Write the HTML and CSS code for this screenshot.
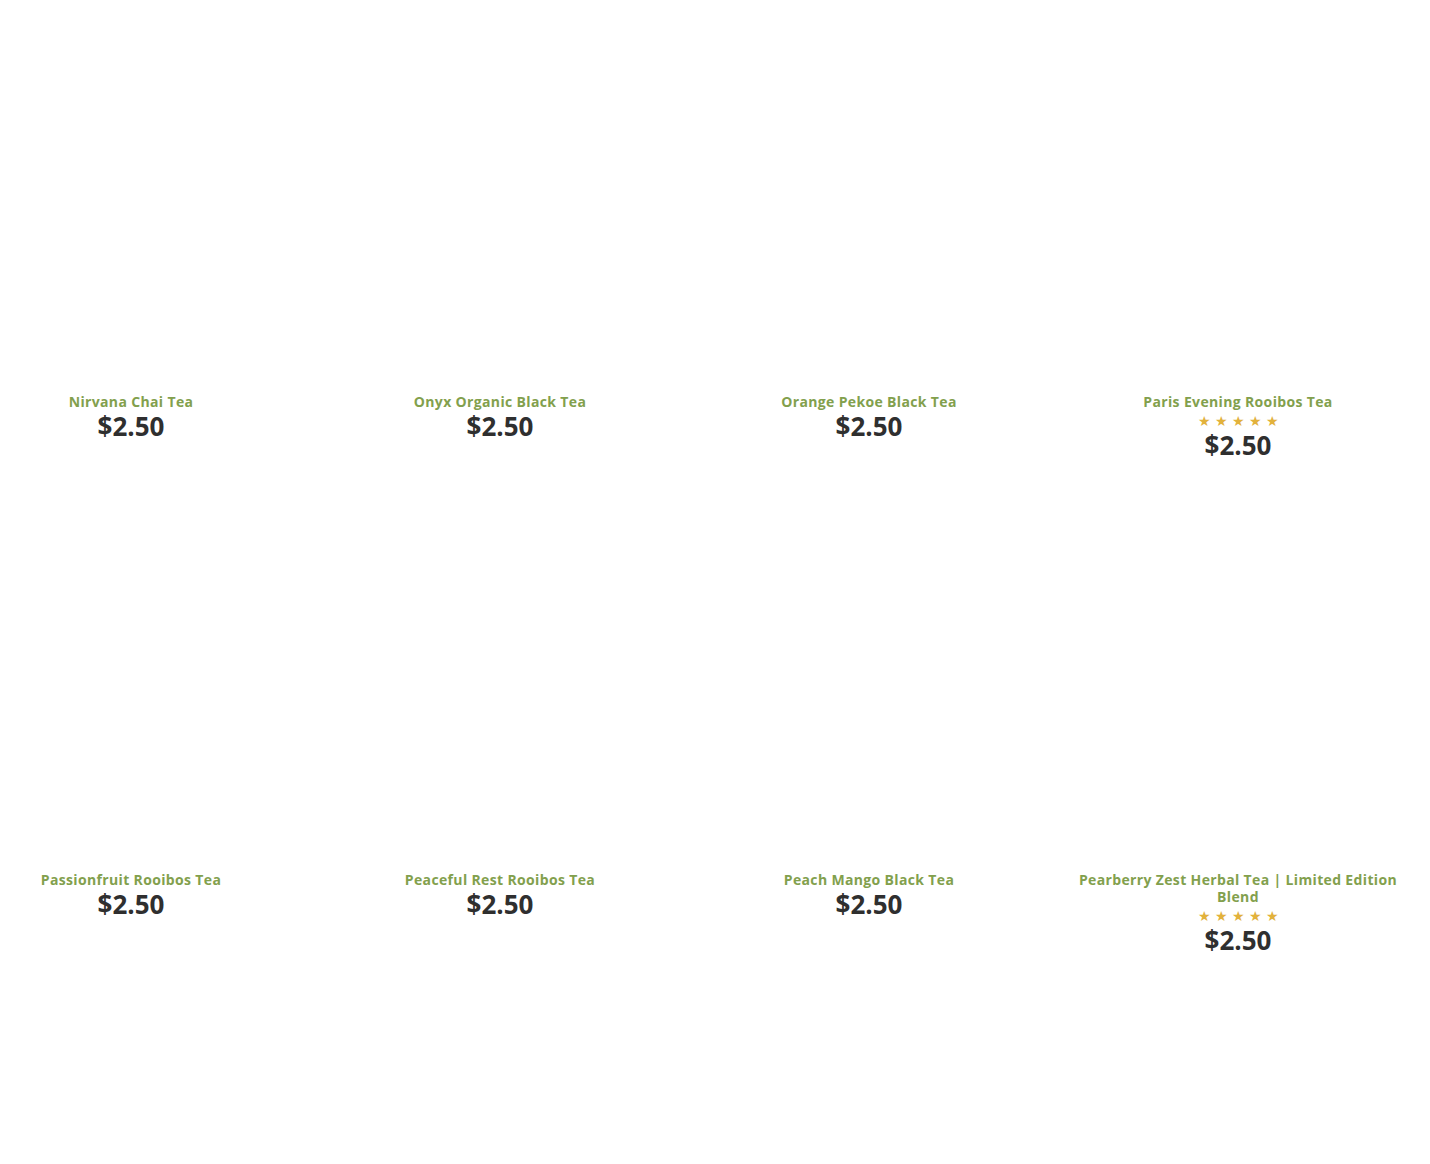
FILE: index.html
```html
<!DOCTYPE html>
<html lang="en">
<head>
    <meta charset="UTF-8">
    <title>Tea Shop</title>
    <link rel="stylesheet" href="styles.css">
</head>
<body>
    <div class="products">
        <div class="product">
            <div class="product-image"></div>
            <h2 class="product-title">Nirvana Chai Tea</h2>
            <div class="product-price">$2.50</div>
        </div>
        <div class="product">
            <div class="product-image"></div>
            <h2 class="product-title">Onyx Organic Black Tea</h2>
            <div class="product-price">$2.50</div>
        </div>
        <div class="product">
            <div class="product-image"></div>
            <h2 class="product-title">Orange Pekoe Black Tea</h2>
            <div class="product-price">$2.50</div>
        </div>
        <div class="product">
            <div class="product-image"></div>
            <h2 class="product-title">Paris Evening Rooibos Tea</h2>
            <div class="stars">&#9733;&#9733;&#9733;&#9733;&#9733;</div>
            <div class="product-price">$2.50</div>
        </div>
        <div class="product">
            <div class="product-image"></div>
            <h2 class="product-title">Passionfruit Rooibos Tea</h2>
            <div class="product-price">$2.50</div>
        </div>
        <div class="product">
            <div class="product-image"></div>
            <h2 class="product-title">Peaceful Rest Rooibos Tea</h2>
            <div class="product-price">$2.50</div>
        </div>
        <div class="product">
            <div class="product-image"></div>
            <h2 class="product-title">Peach Mango Black Tea</h2>
            <div class="product-price">$2.50</div>
        </div>
        <div class="product">
            <div class="product-image"></div>
            <h2 class="product-title">Pearberry Zest Herbal Tea | Limited Edition Blend</h2>
            <div class="stars">&#9733;&#9733;&#9733;&#9733;&#9733;</div>
            <div class="product-price">$2.50</div>
        </div>
    </div>
</body>
</html>
```

FILE: styles.css
```css
body {
    margin: 0;
    font-family: "Open Sans", Arial, sans-serif;
    background-color: #fff;
    color: #333;
}
.products {
    display: grid;
    grid-template-columns: repeat(4, 340px);
    column-gap: 29px;
    row-gap: 17px;
    margin-left: -39px;
}
.product {
    text-align: center;
}
.product-image {
    height: 393px;
}
.product-title {
    margin: 0;
    font-size: 14px;
    line-height: 17px;
    font-weight: 700;
    letter-spacing: 0.35px;
    color: #82a04d;
}
.stars {
    padding-top: 2px;
    font-size: 14px;
    line-height: 17px;
    letter-spacing: 4px;
    padding-left: 4px;
    color: #e2b23c;
}
.product-price {
    font-size: 26px;
    line-height: 32px;
    font-weight: 700;
    color: #2f2f2f;
}
```
